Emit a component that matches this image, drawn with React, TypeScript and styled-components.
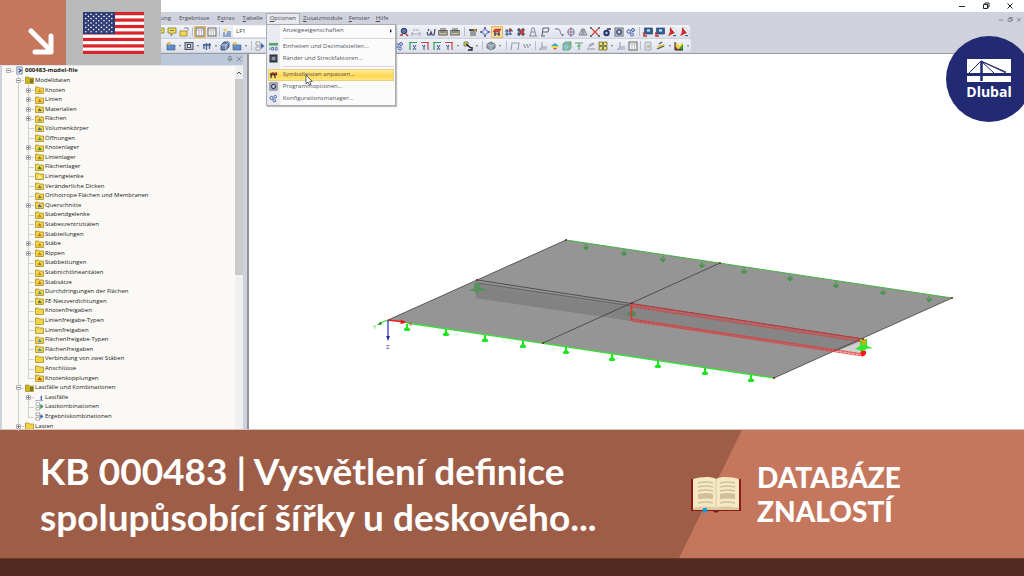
import React from 'react';
import styled, { createGlobalStyle, css } from 'styled-components';

const color = {
  accent: '#c4775d',
  accentDark: '#9d5d47',
  base: '#522b20',
  chrome: '#cfd2dd',
  strip: '#e9ecf4',
  brand: '#212a72',
  green: '#35e035',
};

const GlobalStyle = createGlobalStyle`
  * { box-sizing: border-box; }
  body { margin: 0; background: ${color.base}; font-family: "Open Sans", "Noto Sans", sans-serif; }
  button { font: inherit; color: inherit; border: 0; padding: 0; background: none; }
  ul { list-style: none; margin: 0; padding: 0; }
`;

const Page = styled.div`
  position: relative;
  display: flex;
  flex-direction: column;
  min-height: 100vh;
  overflow: hidden;
`;

const AppWindow = styled.main`
  flex: 1;
  display: flex;
  flex-direction: column;
  background: #fff;
  color: #4a4a50;
  font-size: 6px;
  line-height: 9px;
`;

const TitleBar = styled.div`
  display: flex;
  justify-content: flex-end;
  align-items: center;
  gap: 14px;
  height: 12px;
  padding-right: 9px;
`;

const WindowButton = styled.button<{ $small?: boolean }>`
  display: flex;
  width: ${(p) => (p.$small ? 6 : 10)}px;
  color: ${(p) => (p.$small ? '#85878f' : '#222')};
  svg { width: 100%; }
`;

const MenuBar = styled.nav`
  display: flex;
  align-items: center;
  height: 13px;
  padding: 0 2px 0 134px;
  background: ${color.chrome};
`;

const MenuSlot = styled.div`
  position: relative;
`;

const MenuButton = styled.button<{ $open?: boolean }>`
  display: block;
  height: 12px;
  padding: 0 3px;
  white-space: nowrap;
  border: 1px solid transparent;
  border-width: 1px 0;
  ${(p) => p.$open && css`
    background: #e6e8ee;
    border-width: 1px;
    border-color: #a9adb8;
    border-bottom-color: #e6e8ee;
  `}
`;

const MenuGroup = styled.div`
  display: flex;
  gap: 2px;
`;

const MdiControls = styled.div`
  display: flex;
  gap: 3px;
  margin-left: auto;
`;

const Popup = styled.div`
  position: absolute;
  z-index: 3;
  top: 11px;
  left: 0;
  width: 130px;
  padding: 0 1px;
  background: linear-gradient(90deg, #e9ebf1 13px, #fbfbfc 13px);
  border: 1px solid #a9abb2;
  box-shadow: 1px 1px 1px #8888;
`;

const PopupItem = styled.button<{ $active?: boolean }>`
  display: flex;
  align-items: center;
  width: 100%;
  height: 12px;
  color: #55565c;
  text-align: left;
  white-space: nowrap;
  ${(p) => p.$active && css`
    background: linear-gradient(#fff0b0, #ffd84f 55%, #ffe98c);
    outline: 1px solid #e8cf7c;
    outline-offset: -1px;
  `}
`;

const PopupIcon = styled.span`
  display: flex;
  justify-content: center;
  width: 12px;
  margin-right: 3px;
`;

const PopupArrow = styled.span`
  margin-left: auto;
  margin-right: 2px;
  border: 2px solid transparent;
  border-left-color: #333;
  border-right: 0;
`;

const PopupRule = styled.hr`
  height: 1px;
  margin: 1px 0 2px 15px;
  border: 0;
  background: #d4d5d9;
`;

const Pointer = styled.svg`
  position: absolute;
  left: 38px;
  top: 49px;
  width: 8px;
  height: 12px;
`;

const Toolbars = styled.div`
  background: ${color.chrome};
  border-bottom: 1px solid #9b9ca1;
`;

const ToolRow = styled.div<{ $start: number }>`
  display: flex;
  align-items: center;
  width: max-content;
  height: 14px;
  padding-left: ${(p) => p.$start}px;
  background: linear-gradient(#f1f3f9, #dde1eb);
  border-radius: 0 2px 2px 0;
  border-bottom: 1px solid #cdd1dc;
`;

const ToolButton = styled.button<{ $on?: boolean }>`
  display: flex;
  align-items: center;
  justify-content: center;
  width: 12px;
  height: 12px;
  ${(p) => p.$on && css`
    background: #ffdf9c;
    outline: 1px solid #eab466;
    outline-offset: -1px;
  `}
`;

const DropMark = styled.button`
  width: 6px;
  height: 8px;
  display: flex;
  align-items: center;
  justify-content: center;
  &::after {
    content: '';
    border: 1px solid transparent;
    border-top: 2px solid #666a75;
    border-bottom: 0;
  }
`;

const Divider = styled.span<{ $w: number; $line?: boolean }>`
  width: ${(p) => p.$w}px;
  height: 9px;
  background: ${(p) => (p.$line ? 'linear-gradient(#b9bdc9, #b9bdc9) center / 1px 100% no-repeat' : 'none')};
`;

const CaseSelect = styled.select`
  width: 152px;
  height: 11px;
  margin-right: 13px;
  padding: 0 3px;
  appearance: none;
  border: 0;
  background: #fff;
  color: #333;
  font: 6px/11px "Open Sans", sans-serif;
`;

const Workspace = styled.div`
  flex: 1;
  display: flex;
`;

const Navigator = styled.aside`
  display: flex;
  flex-direction: column;
  flex: none;
  width: 249px;
  padding: 0 4px 0 2px;
  background: ${color.chrome};
  border-right: 2px solid #929399;
`;

const NavHeader = styled.header`
  display: flex;
  justify-content: flex-end;
  align-items: center;
  gap: 3px;
  height: 12px;
  padding: 0 1px 2px 0;
  background: #bac8d9;
  border-bottom: 1px solid #dfe3ea;
`;

const NavBody = styled.div`
  flex: 1;
  display: flex;
  background: #faf9f5;
`;

const Tree = styled.ul`
  flex: 1;
  display: grid;
  grid-auto-rows: minmax(9px, 1fr);
  margin-bottom: -2px;
  color: #1c1c1c;
`;

const TreeRow = styled.li<{ $strong?: boolean }>`
  display: flex;
  align-items: center;
  padding-left: 1px;
  white-space: nowrap;
  font-weight: ${(p) => (p.$strong ? 700 : 400)};
`;

const Guide = styled.span<{ $line?: boolean; $stub?: boolean; $last?: boolean }>`
  position: relative;
  display: flex;
  align-items: center;
  justify-content: center;
  align-self: stretch;
  width: 10px;
  &::before {
    content: '';
    position: absolute;
    left: 5px;
    top: 0;
    height: ${(p) => (p.$last ? '50%' : '100%')};
    border-left: ${(p) => (p.$line ? '1px solid #cfcfcb' : '0')};
  }
  &::after {
    content: '';
    position: absolute;
    left: 5px;
    top: 50%;
    width: 6px;
    border-top: ${(p) => (p.$stub ? '1px solid #cfcfcb' : '0')};
  }
`;

const Expander = styled.button`
  position: relative;
  z-index: 1;
  display: flex;
  width: 5px;
  height: 5px;
  margin-left: 1px;
  background: #fff;
`;

const TreeIcon = styled.span`
  display: flex;
  justify-content: center;
  width: 12px;
`;

const ScrollTrack = styled.div`
  display: flex;
  flex-direction: column;
  width: 8px;
  background: #f0f0f0;
`;

const ScrollUp = styled.button`
  display: flex;
  align-items: center;
  justify-content: center;
  height: 13px;
`;

const ScrollThumb = styled.div`
  height: 54%;
  background: #cbcbcb;
`;

const ModelView = styled.section`
  flex: 1;
  min-width: 0;
  position: relative;
  svg { position: absolute; inset: 0; width: 100%; height: 100%; }
`;

const Corner = styled.div`
  position: absolute;
  z-index: 4;
  top: 0;
  left: 0;
  display: flex;
  height: 65px;
`;

const ArrowTile = styled.div`
  display: flex;
  align-items: flex-end;
  justify-content: flex-end;
  width: 66px;
  padding: 0 11px 10px 0;
  background: ${color.accent};
`;

const FlagTile = styled.div`
  display: flex;
  align-items: center;
  justify-content: center;
  width: 95px;
  background: #bababa;
`;

const Logo = styled.a`
  position: absolute;
  z-index: 4;
  top: 36px;
  right: -8px;
  display: flex;
  flex-direction: column;
  align-items: center;
  width: 86px;
  height: 86px;
  padding-top: 23px;
  border-radius: 50%;
  background: ${color.brand};
  color: #fff;
  font: 700 14px/20px "Open Sans", sans-serif;
  text-decoration: none;
`;

const Banner = styled.section`
  display: flex;
  justify-content: space-between;
  min-height: 129px;
  background: ${color.accentDark};
  border-top: 1px solid #dcc3ba;
  color: #fff;
  font-family: Lato, sans-serif;
`;

const Title = styled.h1`
  align-self: center;
  flex: 1;
  max-width: 620px;
  margin: 0 0 0 40px;
  font-size: 37px;
  font-weight: 700;
  line-height: 46px;
`;

const Category = styled.div`
  display: flex;
  align-items: center;
  background: ${color.accent};
  clip-path: polygon(63px 0, 100% 0, 100% 100%, 0 100%);
`;

const Side = styled.div`
  position: relative;
  display: flex;
  flex: none;
  width: 345px;
  ${Category} { flex: 1; padding-left: 78px; }
`;

const BookSlot = styled.div`
  position: absolute;
  z-index: 1;
  left: 12px;
  top: 47px;
`;

const CategoryName = styled.h2`
  margin: 0;
  font-size: 28px;
  font-weight: 900;
  line-height: 34px;
`;

const Footer = styled.footer`
  height: 18px;
  background: ${color.base};
  border-top: 1px solid #6c3a2c;
`;

const art: Record<string, React.ReactNode> = {
  note: <><path d="M1 1h8v5H6L4 9V6H1z" fill="#f4e04d" stroke="#777a3a" strokeWidth=".8" /><path d="M3 3.500h4" stroke="#777" /></>,
  open: <><path d="M1 4h7v5H1z" fill="#f5d94a" stroke="#857434" strokeWidth=".7" /><path d="M5 1h4v3" fill="#fff" stroke="#667" strokeWidth=".8" /></>,
  table: <><rect x="1" y="1" width="8" height="8" fill="#f6f6f6" stroke="#666" /><path d="M1 3h8M4 3v6M6.500 3v6" stroke="#999" strokeWidth=".6" /></>,
  load: <><path d="M1 9h8M2 8V5M5 8V6M8 8V5" stroke="#4867a5" /><circle cx="3" cy="3" r="1.600" fill="#e7d341" /><path d="M5 4h4v4H5z" fill="#8da9c9" /></>,
  box: <><path d="M1 3h3l1 1h4v5H1z" fill="#5d91c9" stroke="#39567d" strokeWidth=".6" /><circle cx="3" cy="2.500" r="1.700" fill="#eebc45" /></>,
  frame: <><rect x="1" y="1.500" width="8" height="7" fill="#b3bfd3" stroke="#4d5364" /><rect x="3.500" y="3.500" width="3" height="3" fill="#fff" stroke="#334" strokeWidth=".8" /></>,
  bars: <path d="M1 4h8M2 3v5M4.500 2v7M7.500 2v6" stroke="#435f92" strokeWidth="1.300" fill="none" />,
  cube: <><path d="M1 4l3-3h5v5L6 9H1z" fill="#6c86b5" stroke="#2c3a60" strokeWidth=".8" /><path d="M1 4h5v5M6 4l3-3" stroke="#dde" strokeWidth=".8" fill="none" /></>,
  combo: <><path d="M1 1h4v3H1zM1 6h4v3H1z" fill="#fff" stroke="#888" strokeWidth=".8" /><path d="M5 5h3" stroke="#666" /><path d="M6 2L9.500 5 6 8z" fill="#3f6fb5" /></>,
  comboGreen: <><path d="M1 1h4v3H1zM1 6h4v3H1z" fill="#fff" stroke="#999" strokeWidth=".8" /><path d="M5 5h2" stroke="#666" /><path d="M6 2L9.500 5 6 8z" fill="#2b9b45" /></>,
  eye: <><circle cx="5" cy="4" r="2.800" fill="#6077ae" stroke="#26335e" /><path d="M1 8h3M6 6l3 3" stroke="#a33" strokeWidth="1.400" /></>,
  dim: <path d="M1 7h8M1 5v4M9 5v4M2 3h6" stroke="#858894" strokeWidth=".8" strokeDasharray="2 .6" fill="none" />,
  glasses: <path d="M1 5l1 3h2l1-3 1 3h2l1-6M2 4l1-2" stroke="#3d4660" strokeWidth="1.200" fill="none" />,
  ruler: <><rect x=".8" y="3.500" width="8.400" height="4.500" fill="#c9c5a4" stroke="#444" strokeWidth=".8" /><path d="M3 4v2M5 4v2M7 4v2M2 2h6" stroke="#333" strokeWidth=".8" /></>,
  hand: <><path d="M1 2h8v2H1z" fill="#555" /><path d="M2 4h6v5H2z" fill="#9a9a9a" /><path d="M6 2l3 3" stroke="#d1a33a" strokeWidth="1.500" /></>,
  star: <path d="M5 0l1.300 3.700L10 5 6.300 6.300 5 10 3.700 6.300 0 5l3.700-1.300z" fill="#e8ebf8" stroke="#4156a3" strokeWidth=".9" />,
  flagRed: <><path d="M1 5l2-3h6L7 5z" fill="#d34b3e" stroke="#813" strokeWidth=".5" /><path d="M2 7h6M3 5v4M7 5v4" stroke="#2e3a63" strokeWidth="1.200" /></>,
  grid: <><path d="M3 2v7M6 1v7M1 4h8M1 7h7" stroke="#315f97" strokeWidth="1.200" /><rect x="5" y="2" width="3" height="2" fill="#c83b2f" /></>,
  gridRed: <><path d="M3 1v8M7 1v8M1 3h8M1 7h8" stroke="#26345c" strokeWidth="1.200" /><rect x="4" y="3" width="4" height="4" fill="#c83b2f" /></>,
  tower: <path d="M2 9l2-8h2l2 8M3 5h4M1 9h8" stroke="#888c99" strokeWidth="1" fill="none" />,
  label: <path d="M2 9l1-8h6L8 5H3M1 9h4" stroke="#5a6070" strokeWidth="1" fill="none" />,
  curve: <><path d="M1 2h3c3 0 1 5 5 6" stroke="#666b78" strokeWidth="1" fill="none" /><circle cx="8.500" cy="8" r="1" fill="#666" /></>,
  rotate: <><circle cx="5" cy="5" r="3.300" fill="none" stroke="#5e78b5" /><path d="M5 0v10M2 5h6" stroke="#a55" strokeWidth=".8" /></>,
  mirror: <path d="M5 1v8M4 2v6H1zM6 2v6h3z" stroke="#6d6e78" strokeWidth=".8" fill="#e4d8d8" />,
  cross: <><path d="M2 2l6 6M8 2L2 8" stroke="#d13b2f" strokeWidth="1.100" /><path d="M0 1h2M8 1h2M0 9h2M8 9h2" stroke="#444" strokeWidth="1.400" /></>,
  ball: <><circle cx="4.500" cy="6" r="3.200" fill="#2b3563" /><circle cx="4.500" cy="6" r="1.200" fill="#b9c6e9" /><path d="M5 2h4" stroke="#334" strokeWidth="1.500" /></>,
  gear: <><rect x="1" y="1" width="8" height="8" fill="#c8cad1" stroke="#6d7077" /><circle cx="5" cy="5" r="2.300" fill="none" stroke="#344575" strokeWidth="1.300" /></>,
  gears: <><circle cx="2.800" cy="4.500" r="1.800" fill="#d7e0f3" stroke="#455fa0" /><circle cx="7" cy="3" r="1.500" fill="#d7e0f3" stroke="#455fa0" /><circle cx="6" cy="7.500" r="1.500" fill="#d7e0f3" stroke="#455fa0" /></>,
  screen: <><rect x="1.500" y="1" width="8" height="6" fill="#2f6199" stroke="#243a60" strokeWidth=".6" /><rect x="4" y="2.500" width="3" height="2" fill="#dfe9f5" /><path d="M1 5v4h3" stroke="#c92f2a" strokeWidth="1.500" fill="none" /></>,
  pdf: <><path d="M3 1h4l2 3v5H3z" fill="#fff" stroke="#bbb" strokeWidth=".6" /><path d="M3 0l5 6-7 3 2-4z" fill="#cf2b28" /><path d="M6 8.500h3" stroke="#46a" strokeWidth="1.300" /></>,
  axis: <><path d="M1 1.500h8M2 1v8" stroke="#32a04f" strokeWidth="1.200" /><path d="M5 4l3 5M8 4L5 9" stroke="#37538c" strokeWidth="1" /></>,
  axisRed: <><path d="M1 1.500h8M8 1v8" stroke="#c14d43" strokeWidth="1.200" /><path d="M2 4l2 2 1-2M4 6v3" stroke="#37538c" strokeWidth="1" fill="none" /></>,
  pick: <><path d="M1 1h4v4H1z" fill="#e5da57" stroke="#555" strokeWidth=".7" /><path d="M3 3l5 4M5 9h4V6" stroke="#222" strokeWidth="1.400" fill="none" /></>,
  solid: <><path d="M1 3l4-2 4 2v4L5 9 1 7z" fill="#8aa0a5" stroke="#53636c" strokeWidth=".8" /><path d="M1 3l4 2 4-2M5 5v4" stroke="#dde" strokeWidth=".7" fill="none" /></>,
  portal: <path d="M1 9l1-7h7L8 9" stroke="#9a9da8" strokeWidth="1.100" fill="none" />,
  chain: <path d="M1 4h8M2 6h6" stroke="#9a9da8" strokeWidth="1.500" strokeDasharray="2 1" />,
  axes: <path d="M4 1v5h5M4 6L1 9M2 8h7" stroke="#8b93ad" strokeWidth=".9" fill="none" />,
  rainbow: <><path d="M1 5l4-3 4 3z" fill="#44a0d8" /><path d="M1 5h8L7 7H3z" fill="#e8d943" /><path d="M3 7h4L5 9z" fill="#d2503d" /></>,
  mesh: <><path d="M1 3l2-2h6v6L7 9H1z" fill="#9ed6b0" stroke="#4c8f70" strokeWidth=".8" /><path d="M1 3h6v6M7 3l2-2" stroke="#4c8f70" strokeWidth=".7" fill="none" /><path d="M2 4h4v4H2z" fill="#8fc0dc" /></>,
  support: <path d="M1 2h8M5 2v7M3 5h4" stroke="#5ea564" strokeWidth="1.100" />,
  lines: <path d="M1 8h8M2 6l6-3M3 4l5-2" stroke="#8d929e" strokeWidth="1" />,
  tiles: <><path d="M1 1h3.500v3.500H1zM5.500 1H9v3.500H5.500zM1 5.500h3.500V9H1zM5.500 5.500H9V9H5.500z" fill="#efe35e" stroke="#66653c" strokeWidth=".8" /></>,
  page: <><path d="M2 1h6v8H2z" fill="#d9dde4" stroke="#9ca1ac" strokeWidth=".8" /><path d="M4 4h3v3H4z" fill="#bcc6a5" /></>,
  brush: <><path d="M1 5l7-2 1 2-6 3z" fill="#e3cf3b" /><path d="M1 8l7-3M3 3l3-2" stroke="#4c5674" strokeWidth="1.300" /></>,
  palette: <><path d="M1 1v8h8z" fill="#d63a2e" /><path d="M1 1l4 4 4-4v4L5 9 1 5z" fill="#f1d837" /><path d="M4 9l5-6v6z" fill="#38933d" /><path d="M1 1v8h8" stroke="#222" fill="none" /></>,
  units: <><path d="M0 1h10v3H0z" fill="#51a866" /><path d="M1 6v3M3 6h2v3H3zM7 6h2v3H7z" stroke="#4d6fb1" fill="none" /></>,
  margins: <><rect x=".5" y=".5" width="9" height="9" fill="#3f4450" /><rect x="3" y="3" width="4" height="4" fill="#8e9aac" /><path d="M1 2h8M1 8h8" stroke="#15171c" strokeDasharray="1 1" /></>,
  tools: <><path d="M1 4l3-2 2 1 3-1v3H2z" fill="#d64b3b" /><path d="M1 5h8M3 5l-1 4M6 5l1 4" stroke="#3b3740" strokeWidth="1.400" /></>,
  file: <><path d="M2 1h6v8H2z" fill="#dfe6f3" stroke="#5d6d91" strokeWidth=".8" /><path d="M4 3l3 2-3 2" stroke="#2c3d7a" strokeWidth="1.300" fill="none" /></>,
  case: <><path d="M0 8.500h9" stroke="#9aa2bc" strokeWidth="1" /><path d="M7 3v5" stroke="#3b4db1" strokeWidth="1.400" /></>,
};

const Icon = ({ name, size = 10 }: { name: string; size?: number }) => (
  <svg width={size} height={size} viewBox="0 0 10 10" aria-hidden="true">{art[name]}</svg>
);

const Folder = ({ mark }: { mark?: string }) => (
  <svg width="9" height="8" viewBox="0 0 9 8" aria-hidden="true">
    <path d="M.5 7.500V1h3l1 1h4v5.500z" fill={mark === 'root' ? '#cfb21f' : '#f2d544'} stroke="#a88f2c" strokeWidth=".8" />
    {mark === 'root' && <path d="M5 3h3v4H5z" fill="#7b7a22" />}
    {mark && mark !== 'root' && <path d="M3 5.800L4.500 3.500 6.500 5.800z" fill={mark} stroke={mark} strokeWidth=".7" />}
  </svg>
);

type Tool = string | number;
/* "+name" is a pressed button, "v" a drop mark, "|n" a divider, a number an empty gap. */
const upperTools: Tool[] = ['note', 'note', 'open', '|4', '+table', 'table', '|3', 'load', 'select', 'eye', 'dim', 3, 'glasses', 'ruler', 'ruler', '|6', 'hand', 'star', '+flagRed', 'grid', 'gridRed', 'tower', 'label', 2, 'curve', 'rotate', 'mirror', 'cross', 'ball', 'gear', 'gears', '|5', 'screen', 'screen', 'pdf', 'pdf'];
const lowerTools: Tool[] = ['box', 'v', 'frame', 'v', 'bars', 'v', 'cube', 'box', 'v', '|5', 'combo', 127, 'gears', 2, 'axis', 'axisRed', 'axis', 'axisRed', 'v', 1, 'pick', 'v', '|5', 'solid', 'v', '|6', 'portal', 'chain', '|4', 'axes', 'rainbow', 'mesh', 'support', 'lines', 'tiles', 'v', 'axes', 'table', '|3', 'page', 1, 'brush', 'v', 'palette', 'v'];

const renderTool = (tool: Tool, i: number) => {
  if (typeof tool === 'number') return <Divider key={i} $w={tool} />;
  if (tool[0] === '|') return <Divider key={i} $w={Number(tool.slice(1))} $line />;
  if (tool === 'v') return <DropMark key={i} aria-label="Mehr" />;
  if (tool === 'select') {
    return <CaseSelect key={i} aria-label="Lastfall"><option>LF1</option></CaseSelect>;
  }
  const on = tool[0] === '+';
  const name = on ? tool.slice(1) : tool;
  return <ToolButton key={i} $on={on} aria-label={name}><Icon name={name} /></ToolButton>;
};

type Node = { level: number; text: string; open?: '+' | '-'; mark?: string; icon?: string; last?: boolean };
const n = (text: string, mark?: string, open?: '+' | '-'): Node => ({ level: 2, text, mark, open });
const nodes: Node[] = [
  { level: 0, text: '000483-model-file', open: '-', icon: 'file' },
  { level: 1, text: 'Modelldaten', open: '-', mark: 'root' },
  n('Knoten', '#d98c2b', '+'), n('Linien', '#c96f2b', '+'), n('Materialien', '#6f6a5f', '+'), n('Flächen', '#8a8a6a', '+'),
  n('Volumenkörper', '#44699c'), n('Öffnungen', '#6c8f6a'), n('Knotenlager', '#2c8a35', '+'), n('Linienlager', '#8f8524', '+'),
  n('Flächenlager', '#2f7a3f'), n('Liniengelenke', '#fff0c0'), n('Veränderliche Dicken', '#7c7a5c'),
  n('Orthotrope Flächen und Membranen', '#7c7a5c'), n('Querschnitte', '#3f63b5', '+'), n('Stabendgelenke', '#b98a20'),
  n('Stabexzentrizitäten', '#c96f2b'), n('Stabteilungen', '#c96f2b'), n('Stäbe', '#c98a2b', '+'), n('Rippen', '#b98a20', '+'),
  n('Stabbettungen', '#7c8a3c'), n('Stabnichtlinearitäten', '#c98a2b'), n('Stabsätze', '#c96f2b'),
  n('Durchdringungen der Flächen', '#5c8a7c'), n('FE-Netzverdichtungen', '#5f6a5f'), n('Knotenfreigaben'),
  n('Linienfreigabe-Typen'), n('Linienfreigaben', '#e9dca0'), n('Flächenfreigabe-Typen', '#4f8fc0'), n('Flächenfreigaben', '#4f8fc0'),
  n('Verbindung von zwei Stäben'), n('Anschlüsse'), { ...n('Knotenkopplungen', '#c23b20'), last: true },
  { level: 1, text: 'Lastfälle und Kombinationen', open: '-', mark: 'root' },
  { level: 2, text: 'Lastfälle', open: '+', icon: 'case' },
  { level: 2, text: 'Lastkombinationen', icon: 'comboGreen' },
  { level: 2, text: 'Ergebniskombinationen', icon: 'combo', last: true },
  { level: 1, text: 'Lasten', open: '+' },
];

const TreeNode = ({ node }: { node: Node }) => (
  <TreeRow $strong={node.level === 0}>
    {node.level > 0 && <Guide />}
    {node.level > 1 && <Guide $line />}
    <Guide $line={node.level > 0} $stub $last={node.last}>
      {node.open && (
        <Expander aria-label={node.text}>
          <svg width="5" height="5" viewBox="0 0 5 5">
            <path d="M.5.5h4v4h-4z" fill="#fff" stroke="#b5b5b8" />
            <path d={node.open === '+' ? 'M1 2.500h3M2.500 1v3' : 'M1 2.500h3'} stroke="#667" strokeWidth=".8" />
          </svg>
        </Expander>
      )}
    </Guide>
    <TreeIcon>{node.icon ? <Icon name={node.icon} size={9} /> : <Folder mark={node.mark} />}</TreeIcon>
    {node.text}
  </TreeRow>
);

const frontSupports = [[407, 324], [446, 329], [485, 335], [523, 341], [566, 347], [612, 354], [658, 361], [705, 368], [751, 375]];
const backSupports = [[586, 244], [624, 250], [663, 256], [702, 262], [744, 268], [790, 275], [836, 282], [883, 289], [929, 296]];

const Model = () => (
  <svg viewBox="249 54 775 375" preserveAspectRatio="xMidYMid meet" role="img" aria-label="Plattenbalken">
    <path d="M863 339v16l-26-4z" fill="#d0d0d0" />
    <path d="M388 320L566 240 952 298 774 378z" fill="#959595" />
    <path d="M476 282L632 305 863 340 837 351 632 321 476 298z" fill="#868686" />
    <path d="M476 286l156 22v13L476 298z" fill="#828282" />
    {backSupports.map(([x, y]) => (
      <path key={x} d={`M${x} ${y}v6M${x - 3} ${y + 4}h6M${x - 2} ${y + 2}l2 4 2-4`} stroke="#3e9440" strokeWidth="1" fill="none" />
    ))}
    <path d="M388 320L566 240M774 378L952 298M543 343L720 263M477 280L863 339" stroke="#3c3c3c" strokeWidth=".8" fill="none" />
    <path d="M477 283L632 306" stroke="#555" strokeWidth=".7" />
    <path d="M566 240L952 298" stroke="#3fb53f" strokeWidth="1" />
    <path d="M407 323L774 378" stroke={color.green} strokeWidth="1.300" />
    {frontSupports.map(([x, y]) => (
      <g key={x} fill="#21e321">
        <path d={`M${x - 1} ${y}h2v3l2.500 3h-7l2.500-3z`} />
        <ellipse cx={x} cy={y + 5.5} rx="3.200" ry="1.500" />
      </g>
    ))}
    <path d="M474 283h6v5h3l3 3h-7l-3 3-2-3h-5l5-3z" fill="#4b9350" opacity=".8" />
    <path d="M626 314l6-4 5 4-5 3z" fill="#4b8a4f" opacity=".8" />
    <g fill="none" stroke="#ee3030">
      <path d="M632 305L863 340M632 320L863 355" strokeWidth="3" opacity=".35" />
      <path d="M632 304L863 339M632 307L863 342M632 319L863 354M632 321L863 356" strokeWidth=".8" strokeDasharray="3 1" />
      <path d="M631.500 304v17" strokeWidth="1.300" />
      <path d="M861 340v15M864 340v15" strokeWidth="1.200" strokeDasharray="2 1" />
    </g>
    <path d="M855 349l5-3v-7h7v7l6 2-7 1-3 3-3-2z" fill="#2bea2b" />
    <path d="M861 339h5v6h-5z" fill="#b6b61e" />
    <path d="M861 351h5v3l-2 2h-3z" fill="#ff1616" />
    <g fill="#7a1f1f">
      {[[566, 240], [952, 298], [774, 378], [543, 343], [720, 263], [477, 280], [632, 303], [863, 339]].map(([x, y]) => (
        <circle key={x} cx={x} cy={y} r="1" />
      ))}
    </g>
    <path d="M388 320l16 2" stroke="#f01c1c" strokeWidth="1.300" />
    <path d="M401 319.500l6 3-6.500 1.500z" fill="#e01818" />
    <path d="M388 320l-8 3" stroke="#2ddb2d" strokeWidth="1.200" />
    <path d="M377 325l4-3.500 1 3z" fill="#198b19" />
    <path d="M388 320v17" stroke="#2323d8" strokeWidth="1.200" />
    <path d="M386.300 336h3.600L388 341z" fill="#1a1aa5" />
    <g fontFamily="Open Sans, sans-serif" fontSize="6">
      <text x="409" y="326" fill="#e01818">X</text>
      <text x="373" y="329" fill="#2ddb2d">Y</text>
      <text x="386" y="349" fill="#2323b0">Z</text>
    </g>
  </svg>
);

const Flag = () => (
  <svg width="61" height="42" viewBox="0 0 61 42" role="img" aria-label="USA">
    <rect width="61" height="42" fill="#fff" />
    {[0, 2, 4, 6, 8, 10, 12].map((i) => <rect key={i} y={(i * 42) / 13} width="61" height={42 / 13} fill="#d9242c" />)}
    <rect width="32" height="22" fill="#2f3b74" />
    {Array.from({ length: 9 }, (_, r) =>
      Array.from({ length: r % 2 ? 5 : 6 }, (_, c) => (
        <circle key={`${r}-${c}`} cx={2.8 + c * 5.2 + (r % 2) * 2.6} cy={2.2 + r * 2.2} r=".8" fill="#fff" />
      )),
    )}
  </svg>
);

const Book = () => (
  <svg width="50" height="37" viewBox="0 0 50 37" aria-hidden="true">
    <path d="M0 2h50v32H28c-1 2-5 2-6 0H0z" fill="#8b1a1a" />
    <path d="M2 2C9 0 20-1 25 2c5-3 16-2 23 0v31H2z" fill="#f6e8c4" />
    <path d="M2 31c8-2 18-2 23 0 5-2 15-2 23 0v2H2z" fill="#d9caa0" />
    <path d="M25 2v30" stroke="#e3d4ac" strokeWidth="1.500" />
    <g stroke="#cfc09a" strokeWidth="1.500" fill="none">
      <path d="M7 6q8-2 15 0M7 10q8-2 15 0M7 14q8-2 15 0M7 26q8-2 15 0M29 6q7-2 15 0M29 10q7-2 15 0M29 14q7-2 15 0M29 26q7-2 15 0" />
    </g>
    <path d="M7 17q8-2 15 0v5q-7-1-15 0zM29 17q7-2 15 0v5q-8-1-15 0z" fill="#cfc09a" />
    <path d="M12 31h4v5l-2-1-2 1z" fill="#0e9de0" />
  </svg>
);

const windowArt = {
  min: <path d="M2 5.500h6" />,
  max: <path d="M2.500 3.500h4v4h-4zM4 3.500V2h4v4H6.500" />,
  close: <path d="M2.500 2.500l5 5M7.500 2.500l-5 5" />,
};
const WindowControls = ({ small }: { small?: boolean }) => (
  <>
    {(Object.keys(windowArt) as (keyof typeof windowArt)[]).map((k) => (
      <WindowButton key={k} $small={small} aria-label={k}>
        <svg viewBox={small ? '1 0 8 8' : '0 0 10 10'} fill="none" stroke="currentColor" strokeWidth={small ? 1.3 : 1}>{windowArt[k]}</svg>
      </WindowButton>
    ))}
  </>
);

export default function App() {
  return (
    <Page>
      <GlobalStyle />
      <AppWindow>
        <TitleBar><WindowControls /></TitleBar>
        <MenuBar>
          <MenuGroup>
            <MenuButton>Berechnung</MenuButton>
            <MenuButton>Ergebnisse</MenuButton>
            <MenuButton>E<u>x</u>tras</MenuButton>
            <MenuButton><u>T</u>abelle</MenuButton>
          </MenuGroup>
          <MenuSlot>
            <MenuButton $open><u>O</u>ptionen</MenuButton>
            <Popup>
              <PopupItem><PopupIcon />Anzeigeeigenschaften<PopupArrow /></PopupItem>
              <PopupRule />
              <PopupItem><PopupIcon><Icon name="units" size={9} /></PopupIcon>Einheiten und Dezimalstellen...</PopupItem>
              <PopupItem><PopupIcon><Icon name="margins" size={9} /></PopupIcon>Ränder und Streckfaktoren...</PopupItem>
              <PopupRule />
              <PopupItem $active><PopupIcon><Icon name="tools" size={9} /></PopupIcon>Symbolleisten anpassen...</PopupItem>
              <PopupItem><PopupIcon><Icon name="gear" size={9} /></PopupIcon>Programmoptionen...</PopupItem>
              <PopupItem><PopupIcon><Icon name="gears" size={9} /></PopupIcon>Konfigurationsmanager...</PopupItem>
              <Pointer viewBox="0 0 8 12">
                <path d="M1 1v9l2-2 1.500 3 1.500-.7L4.700 7.500H7.300z" fill="#fff" stroke="#444" strokeWidth=".8" />
              </Pointer>
            </Popup>
          </MenuSlot>
          <MenuButton><u>Z</u>usatzmodule</MenuButton>
          <MenuButton><u>F</u>enster</MenuButton>
          <MenuButton><u>H</u>ilfe</MenuButton>
          <MdiControls><WindowControls small /></MdiControls>
        </MenuBar>
        <Toolbars>
          <ToolRow $start={154}>{upperTools.map(renderTool)}</ToolRow>
          <ToolRow $start={165}>{lowerTools.map(renderTool)}</ToolRow>
        </Toolbars>
        <Workspace>
          <Navigator>
            <NavHeader>
              <WindowButton $small aria-label="Anheften">
                <svg viewBox="0 0 10 10" fill="none" stroke="currentColor" strokeWidth="1.500"><path d="M3 1h4v5H3zM1 6h8M5 6v4" /></svg>
              </WindowButton>
              <WindowButton $small aria-label="Navigator schließen">
                <svg viewBox="0 0 10 10" fill="none" stroke="currentColor" strokeWidth="1.500"><path d="M1 1l8 8M9 1L1 9" /></svg>
              </WindowButton>
            </NavHeader>
            <NavBody>
              <Tree>{nodes.map((node) => <TreeNode key={node.text} node={node} />)}</Tree>
              <ScrollTrack>
                <ScrollUp aria-label="Nach oben">
                  <svg width="6" height="4" viewBox="0 0 6 4"><path d="M1 3l2-2 2 2" fill="none" stroke="#444" /></svg>
                </ScrollUp>
                <ScrollThumb />
              </ScrollTrack>
            </NavBody>
          </Navigator>
          <ModelView><Model /></ModelView>
        </Workspace>
      </AppWindow>
      <Banner>
        <Title>KB 000483 | Vysvětlení definice spolupůsobící šířky u deskového...</Title>
        <Side>
          <Category><CategoryName>DATABÁZE<br />ZNALOSTÍ</CategoryName></Category>
          <BookSlot><Book /></BookSlot>
        </Side>
      </Banner>
      <Footer />
      <Corner>
        <ArrowTile>
          <svg width="27" height="27" viewBox="0 0 27 27" aria-hidden="true">
            <path d="M3 3l20 20M23 8v16H7" fill="none" stroke="#fff" strokeWidth="5" strokeLinecap="round" strokeLinejoin="round" />
          </svg>
        </ArrowTile>
        <FlagTile><Flag /></FlagTile>
      </Corner>
      <Logo href="#">
        <svg width="44" height="23" viewBox="0 0 44 23" aria-hidden="true">
          <path d="M0 0h44v14H0zM0 17h44v6H0z" fill="#fff" />
          <path d="M2 14L14 2l13 12M14 2l25 12M16 3l23 10" stroke={color.brand} strokeWidth="1" fill="none" />
          <path d="M14.500 2v20" stroke={color.brand} strokeWidth="2.500" />
        </svg>
        Dlubal
      </Logo>
    </Page>
  );
}
